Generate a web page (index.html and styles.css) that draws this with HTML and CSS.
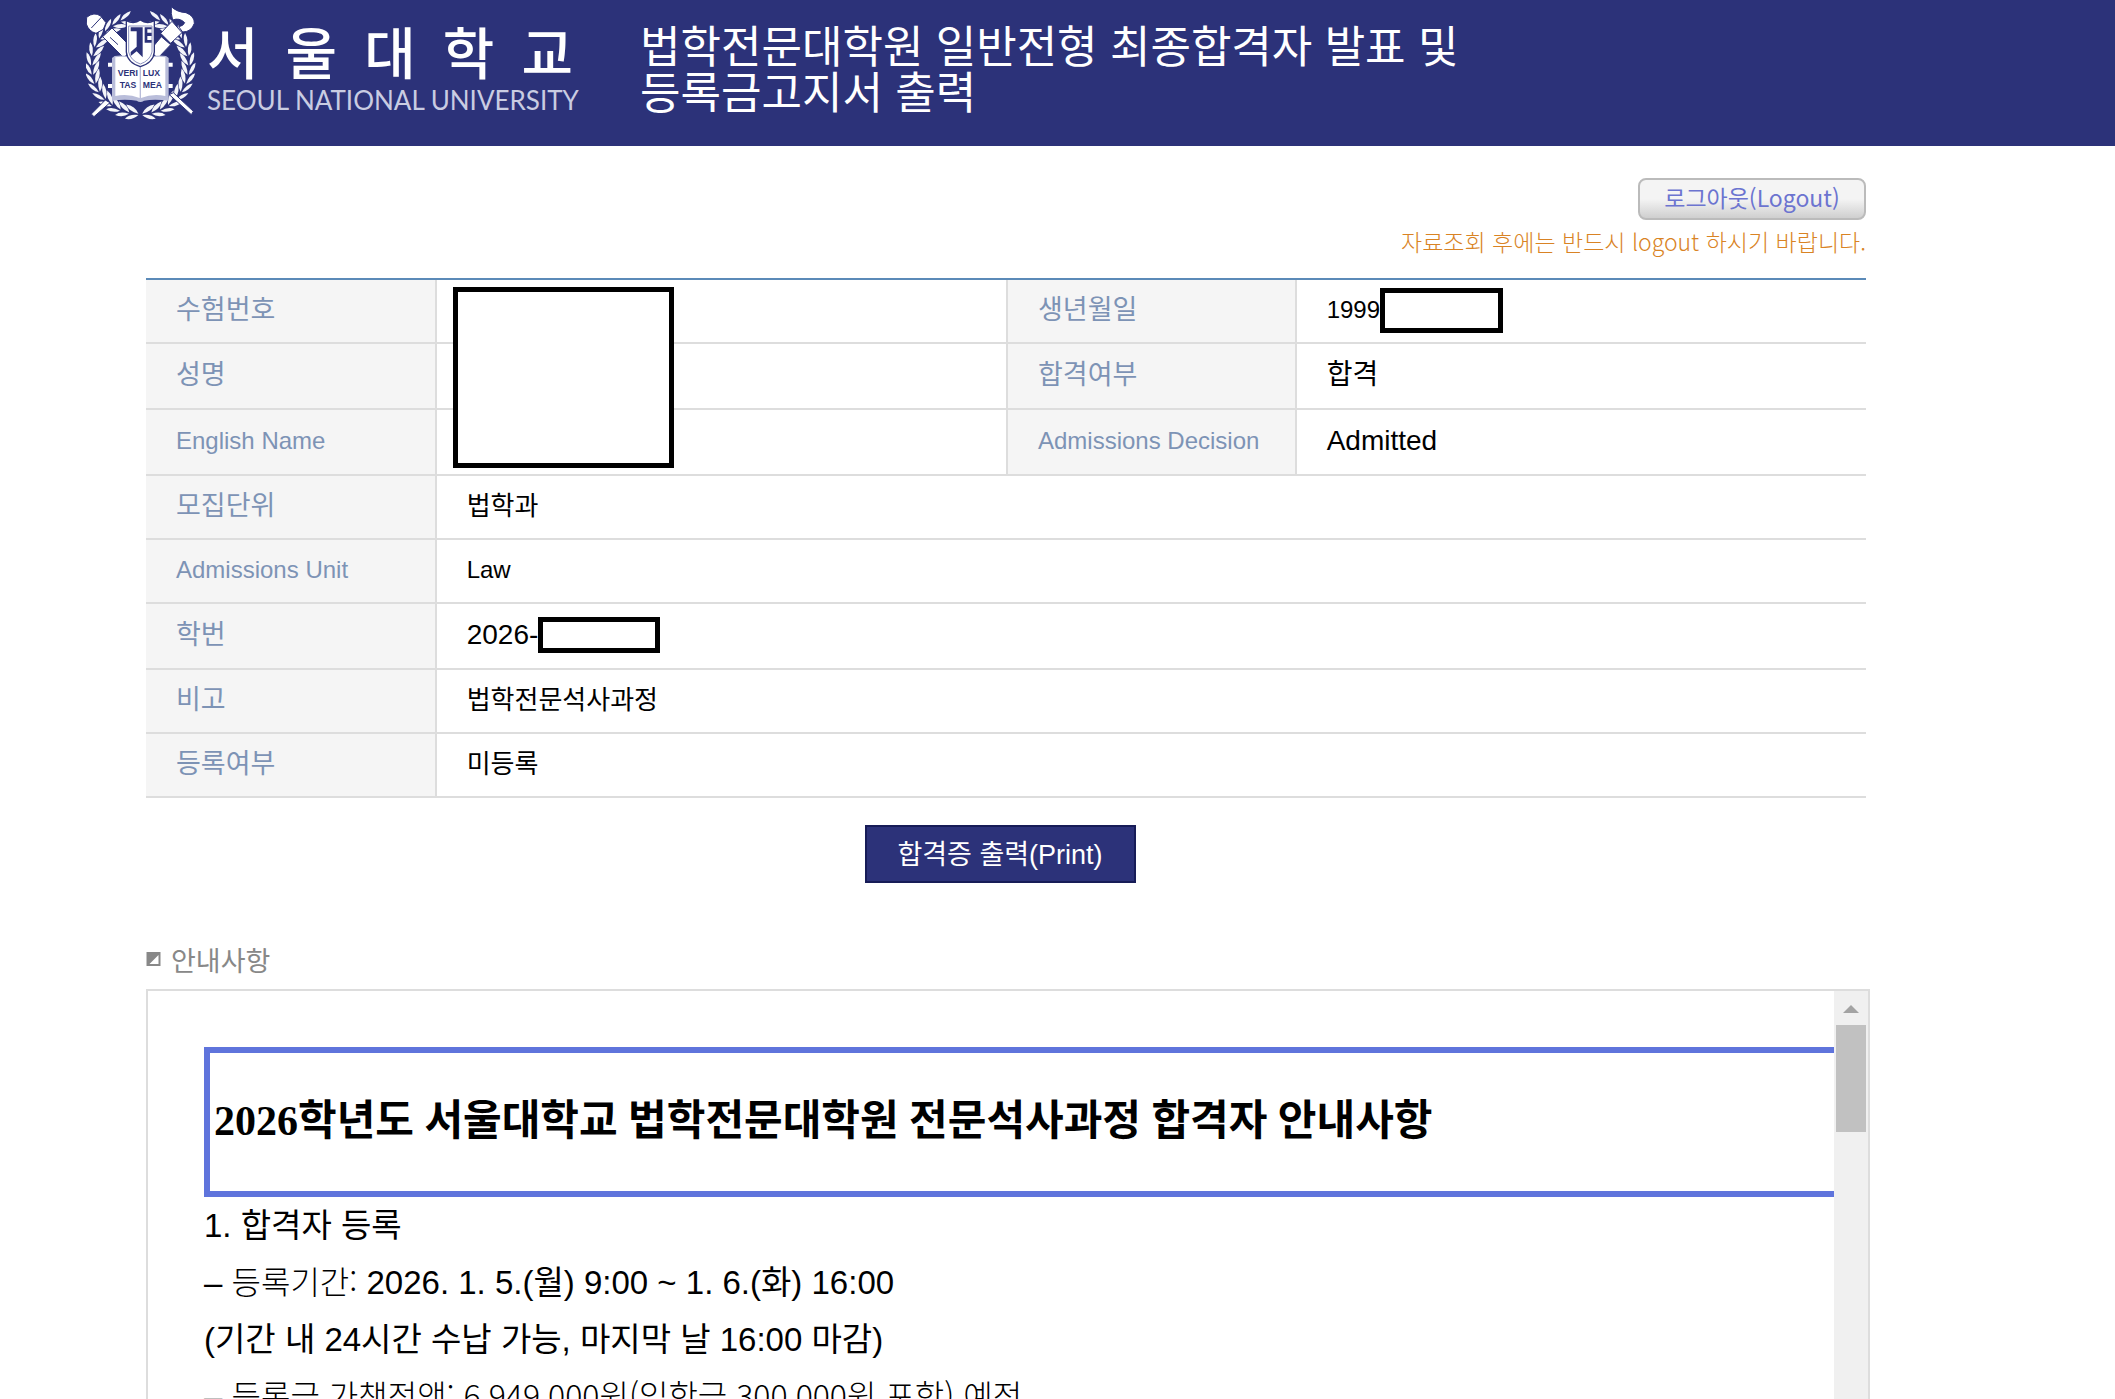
FILE: index.html
```
<!DOCTYPE html>
<html lang="ko">
<head>
    <meta charset="UTF-8">
    <meta name="viewport" content="width=device-width, initial-scale=1.0">
    <title>서울대학교 법학전문대학원 최종합격자 발표</title>
    <link rel="stylesheet" href="styles.css">
</head>
<body>
    <header class="header">
        <div class="logo">
            <svg class="emblem" viewBox="46 16 330 342" aria-hidden="true">
                <defs>
                    <g id="leaf">
                        <path d="M216 339Q204 317 177 315Q186 335 216 339Z"/>
                        <path d="M216 343Q202 360 177 358Q188 342 216 343Z"/>
                    </g>
                    <g id="branch">
                        <use href="#leaf" transform="rotate(5 209 195)"/>
                        <use href="#leaf" transform="rotate(16 209 195)"/>
                        <use href="#leaf" transform="rotate(27 209 195)"/>
                        <use href="#leaf" transform="rotate(38 209 195)"/>
                        <use href="#leaf" transform="rotate(49 209 195)"/>
                        <use href="#leaf" transform="rotate(60 209 195)"/>
                        <use href="#leaf" transform="rotate(71 209 195)"/>
                        <use href="#leaf" transform="rotate(82 209 195)"/>
                        <use href="#leaf" transform="rotate(93 209 195)"/>
                        <use href="#leaf" transform="rotate(104 209 195)"/>
                        <use href="#leaf" transform="rotate(115 209 195)"/>
                        <use href="#leaf" transform="rotate(126 209 195)"/>
                        <use href="#leaf" transform="rotate(137 209 195)"/>
                        <use href="#leaf" transform="rotate(148 209 195)"/>
                        <use href="#leaf" transform="rotate(159 209 195)"/>
                    </g>
                </defs>
                <g fill="#f4f5fa">
                    <use href="#branch"/>
                    <use href="#branch" transform="translate(418 0) scale(-1 1)"/>
                </g>
                <!-- pen and torch -->
                <g fill="#fff" stroke="#2c3279" stroke-width="3">
                    <path d="M48 50Q70 32 90 46L106 66L98 86L76 98Q54 92 47 70Z"/>
                    <path d="M96 108L124 82L184 142L160 172Z"/>
                    <path d="M62 82L92 50M118 110L142 132" fill="none"/>
                    <path d="M236 152L272 108L300 132L262 172Z"/>
                    <path d="M270 98L304 62L334 96L300 128Z"/>
                    <path d="M302 18Q318 34 346 36Q372 46 371 68Q362 94 336 94L324 78Q338 76 342 66Q326 50 306 58Q300 40 302 18Z"/>
                    <path d="M62 340L104 298L118 306L70 348Z"/>
                    <path d="M296 282L308 276L368 332L362 342Z"/>
                </g>
                <!-- book -->
                <path d="M112 186h14v12h-14zM292 186h14v12h-14zM112 250h14v12h-14zM292 250h14v12h-14z" fill="#fff"/>
                <path d="M124 172L132 166Q170 160 209 180Q248 160 286 166L294 172V300Q250 294 220 300Q209 308 198 300Q165 294 124 300Z" fill="#b9bdda"/>
                <path d="M134 170Q172 164 207 184V292Q172 278 134 286ZM284 170Q246 164 211 184V292Q246 278 284 286Z" fill="#fff"/>
                <g class="motto">
                    <text x="141" y="226">VERI</text>
                    <text x="216" y="226">LUX</text>
                    <text x="147" y="262">TAS</text>
                    <text x="216" y="262">MEA</text>
                </g>
                <!-- shield -->
                <path d="M167 60Q190 72 209 58Q228 72 251 60V154Q248 186 209 198Q170 186 167 154Z" fill="#fff" stroke="#2c3279" stroke-width="4"/>
                <path d="M174 76H244V154Q238 180 209 190Q180 180 174 154Z" fill="none" stroke="#8d92bf" stroke-width="3"/>
                <path d="M180 80H216V170L198 152L180 166V154L198 138V92H180Z" fill="#2c3279"/>
                <path d="M222 80H243V86H230V96H243V106H230V118H243V126H222Z" fill="#2c3279"/>
            </svg>
            <div class="logo-text">
                <div class="logo-ko"><span>서</span><span>울</span><span>대</span><span>학</span><span>교</span></div>
                <div class="logo-en">SEOUL NATIONAL UNIVERSITY</div>
            </div>
        </div>
        <h1>법학전문대학원 일반전형 최종합격자 발표 및<br>등록금고지서 출력</h1>
    </header>

    <main class="content">
        <div class="logout">
            <button type="button" class="btn-logout">로그아웃(Logout)</button>
            <p>자료조회 후에는 반드시 logout 하시기 바랍니다.</p>
        </div>

        <table class="result">
            <colgroup>
                <col class="col-label">
                <col class="col-value">
                <col class="col-label">
                <col class="col-value">
            </colgroup>
            <tr>
                <th scope="row">수험번호</th>
                <td class="masked"><span class="mask mask-person"></span></td>
                <th scope="row">생년월일</th>
                <td class="en"><div class="value">1999<span class="mask mask-birth"></span></div></td>
            </tr>
            <tr class="tall">
                <th scope="row">성명</th>
                <td></td>
                <th scope="row">합격여부</th>
                <td class="strong">합격</td>
            </tr>
            <tr class="tall">
                <th scope="row" class="en">English Name</th>
                <td></td>
                <th scope="row" class="en">Admissions Decision</th>
                <td class="strong">Admitted</td>
            </tr>
            <tr>
                <th scope="row">모집단위</th>
                <td colspan="3">법학과</td>
            </tr>
            <tr>
                <th scope="row" class="en">Admissions Unit</th>
                <td colspan="3" class="en">Law</td>
            </tr>
            <tr class="tall">
                <th scope="row">학번</th>
                <td colspan="3" class="strong"><div class="value">2026-<span class="mask mask-id"></span></div></td>
            </tr>
            <tr>
                <th scope="row">비고</th>
                <td colspan="3">법학전문석사과정</td>
            </tr>
            <tr>
                <th scope="row">등록여부</th>
                <td colspan="3">미등록</td>
            </tr>
        </table>

        <div class="print">
            <button type="button" class="btn-print">합격증 출력(Print)</button>
        </div>

        <h2>
            <svg class="bullet" viewBox="0 0 14 14" aria-hidden="true">
                <path d="M0 0H14V14H0Z" fill="#888"/>
                <path d="M12 3V12H3Z" fill="#fff"/>
            </svg>
            안내사항
        </h2>

        <section class="notice">
            <div class="notice-body">
                <h3>2026학년도 서울대학교 법학전문대학원 전문석사과정 합격자 안내사항</h3>
                <p>1. 합격자 등록</p>
                <p>– <span class="thin">등록기간:</span> 2026. 1. 5.(월) 9:00 ~ 1. 6.(화) 16:00</p>
                <p>(기간 내 24시간 수납 가능, 마지막 날 16:00 마감)</p>
                <p>– <span class="thin">등록금 가책정액: 6,949,000원(입학금 300,000원 포함) 예정</span></p>
            </div>
            <div class="scrollbar">
                <span class="scroll-up"></span>
                <span class="scroll-thumb"></span>
            </div>
        </section>
    </main>
</body>
</html>
```

FILE: styles.css
```
* {
    box-sizing: border-box;
}
body {
    margin: 0;
    height: 100vh;
    overflow: hidden;
    display: flex;
    flex-direction: column;
    background: #fff;
    color: #000;
    font-family: "Liberation Sans", "Noto Sans CJK KR", sans-serif;
    font-size: 26px;
}
h1, h2, h3, p {
    margin: 0;
}

/* header */
.header {
    display: flex;
    align-items: flex-start;
    height: 146px;
    flex-shrink: 0;
    padding: 6px 0 0 86px;
    background: #2c3279;
    color: #fff;
}
.logo {
    display: flex;
    width: 554px;
}
.emblem {
    width: 110px;
    height: 114px;
}
.motto text {
    font-family: "Liberation Sans", sans-serif;
    font-size: 26px;
    font-weight: 700;
    fill: #2c3279;
}
.logo-text {
    width: 366px;
    margin-left: 11px;
    padding-top: 12px;
    white-space: nowrap;
}
.logo-ko {
    display: flex;
    justify-content: space-between;
    font-family: "Noto Sans CJK KR", sans-serif;
    font-size: 56px;
    font-weight: 500;
    line-height: 64px;
}
.logo-en {
    font-family: Lato, sans-serif;
    font-size: 26px;
    line-height: 36px;
    color: #c9cce2;
}
h1 {
    padding-top: 15px;
    font-family: "Noto Sans CJK KR", sans-serif;
    font-size: 44px;
    font-weight: 400;
    line-height: 46px;
}

.content {
    flex: 1;
    min-height: 0;
    display: flex;
    flex-direction: column;
    padding: 32px 249px 0 146px;
}

/* logout */
.logout {
    text-align: right;
    font-family: "Noto Sans CJK KR", sans-serif;
    font-weight: 300;
}
.logout p {
    height: 58px;
    font-size: 23px;
    line-height: 42px;
    color: #d98324;
}
.btn-logout {
    display: block;
    width: 228px;
    height: 42px;
    margin-left: auto;
    padding: 0 0 4px;
    border: 2px solid #bbb;
    border-radius: 8px;
    background: linear-gradient(#f4f4f4 50%, #cfcfcf);
    color: #6c74d0;
    font-family: inherit;
    font-size: 23px;
    line-height: 34px;
}

/* result table */
.result {
    width: 100%;
    table-layout: fixed;
    border-spacing: 0;
    border-top: 2px solid #5b8ab8;
}
.col-label {
    width: 16.9%;
}
.col-value {
    width: 33.1%;
}
.result th,
.result td {
    height: 64px;
    padding: 0 30px 2px;
    border-bottom: 2px solid #ddd;
    text-align: left;
    font-weight: 400;
    line-height: 30px;
    white-space: nowrap;
}
.result .tall th,
.result .tall td {
    height: 66px;
}
.result th {
    background: #f5f5f5;
    border-right: 2px solid #ddd;
    color: #7d93b5;
    font-size: 27px;
}
.result td + th {
    border-left: 2px solid #ddd;
}
.result .en {
    font-size: 24px;
}
.result .strong {
    font-size: 28px;
}
.result .masked {
    position: relative;
}
.value {
    display: flex;
    align-items: center;
}
.mask {
    background: #fff;
    border: 5px solid #000;
}
.mask-person {
    position: absolute;
    top: 7px;
    left: 16px;
    width: 221px;
    height: 181px;
    z-index: 1;
}
.mask-birth {
    width: 123px;
    height: 45px;
}
.mask-id {
    width: 122px;
    height: 36px;
}

.print {
    padding: 27px 12px 56px 0;
    text-align: center;
}
.btn-print {
    width: 271px;
    height: 58px;
    padding: 0 0 4px;
    border: 2px solid #171c57;
    background: #2c3279;
    color: #fff;
    font-family: inherit;
    font-size: 27px;
    vertical-align: top;
}

/* notice */
h2 {
    display: flex;
    align-items: center;
    gap: 10px;
    height: 50px;
    padding-bottom: 10px;
    font-size: 27px;
    font-weight: 400;
    color: #888;
}
.bullet {
    width: 15px;
    height: 14px;
}
.notice {
    flex: 1;
    min-height: 0;
    display: flex;
    margin-right: -4px;
    border: 2px solid #ddd;
    border-bottom: 0;
}
.notice-body {
    flex: 1;
    overflow: hidden;
    padding: 56px 0 0 56px;
    font-size: 33px;
    line-height: 57px;
    white-space: nowrap;
}
.notice-body h3 {
    height: 150px;
    padding-left: 4px;
    border: 6px solid #5f74dc;
    border-right: 0;
    font-family: "Liberation Serif", "Noto Sans CJK KR", serif;
    font-size: 42px;
    line-height: 136px;
}
.thin {
    font-family: "Noto Sans CJK KR", sans-serif;
    font-size: 32px;
    font-weight: 300;
    line-height: 1;
}
.scrollbar {
    display: flex;
    flex-direction: column;
    align-items: center;
    gap: 12px;
    width: 34px;
    padding-top: 14px;
    background: #f0f0f0;
}
.scroll-up {
    border: 8px solid transparent;
    border-top: 0;
    border-bottom-color: #a3a3a3;
}
.scroll-thumb {
    width: 30px;
    height: 107px;
    background: #c1c1c1;
}
```
